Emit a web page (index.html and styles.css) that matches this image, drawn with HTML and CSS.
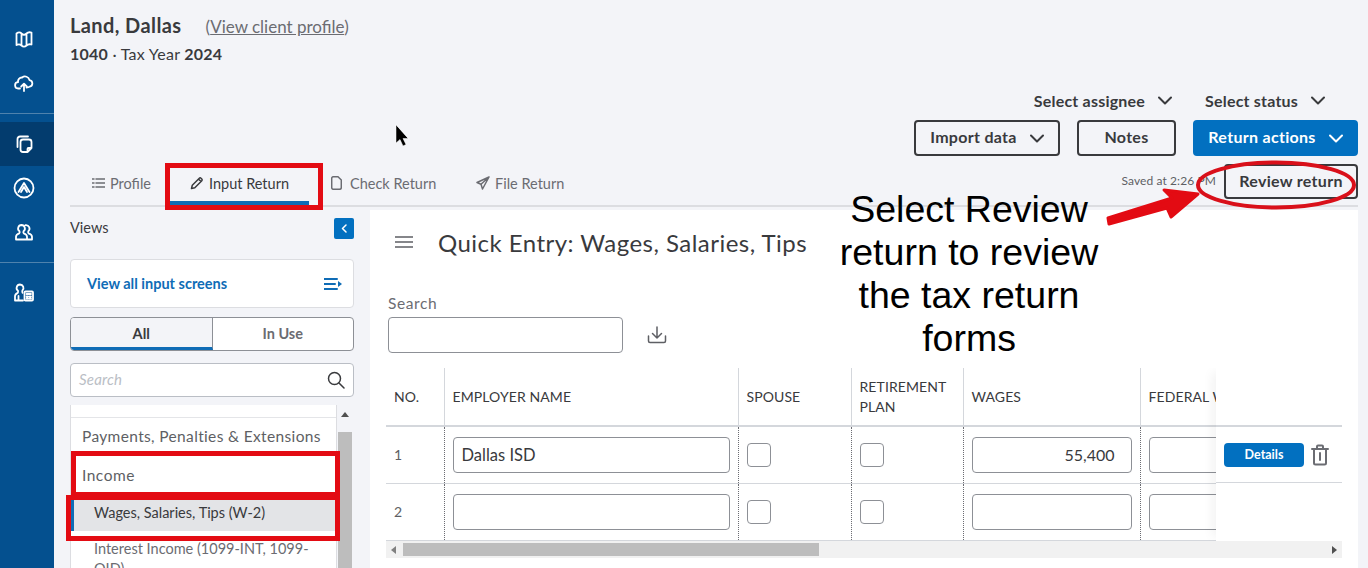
FILE: index.html
```html
<!DOCTYPE html>
<html lang="en">
<head>
    <meta charset="UTF-8">
    <meta name="viewport" content="width=device-width, initial-scale=1.0">
    <title>Land, Dallas - Input Return</title>
    <link rel="stylesheet" href="styles.css">
</head>
<body>
    <!-- Left rail -->
    <nav class="rail">
        <div class="rail-group">
            <a class="rail-item" href="#">
                <svg width="20" height="20" viewBox="0 0 20 20"><path d="M2.500 4.500c2-1.500 3.500-1.500 5 0c1.500 1.500 3.500 1.500 5 0c1.500-1.500 3-1.500 5-1v12c-2-.5-3.500-.5-5 1c-1.500 1.500-3.500 1.500-5 0c-1.500-1.500-3-1.500-5-.5z M7.500 4.500v12 M12.500 4.500v12"/></svg>
            </a>
            <a class="rail-item" href="#">
                <svg width="20" height="20" viewBox="0 0 20 20"><path d="M6 15.500H4.500a3.200 3.200 0 0 1-.4-6.400a3.800 3.800 0 0 1 4-4.600a4.600 4.600 0 0 1 7.400 2.600a3.300 3.300 0 0 1 .2 6.500c-.9.800-2 .9-3.200.9 M10 18v-7 M7.200 13.500l2.800-2.800l2.800 2.800"/></svg>
            </a>
        </div>
        <div class="rail-group">
            <a class="rail-item active" href="#">
                <svg width="20" height="20" viewBox="0 0 20 20"><path d="M3.500 13V5a2.500 2.500 0 0 1 2.500-2.500h8"/><path d="M6.500 8a2.500 2.500 0 0 1 2.500-2.500h6a2.500 2.500 0 0 1 2.500 2.500v6l-4 4H9a2.500 2.500 0 0 1-2.500-2.500z M13.500 18v-3a1 1 0 0 1 1-1h3"/></svg>
            </a>
            <a class="rail-item" href="#">
                <svg width="22" height="22" viewBox="0 0 22 22"><circle cx="11" cy="11" r="9.500"/><path d="M5.500 15L11 6l5.500 9 M8 15l3-5l3 5"/></svg>
            </a>
            <a class="rail-item" href="#">
                <svg width="20" height="20" viewBox="0 0 20 20"><path d="M7.500 3a3.500 3.500 0 0 0-2 6.300c.3.800.2 1.500-.2 2c-1.800.6-3.300 1.500-3.300 3.400V17.500h11v-2.800c0-1.900-1.500-2.800-3.300-3.400c-.4-.5-.5-1.200-.2-2a3.500 3.500 0 0 0-2-6.300z M11.500 3.200a3.500 3.500 0 0 1 2.800 6.100c-.3.800-.2 1.500.2 2c1.800.6 3.500 1.500 3.500 3.400v2.800h-5"/></svg>
            </a>
        </div>
        <div class="rail-group">
            <a class="rail-item" href="#">
                <svg width="20" height="20" viewBox="0 0 20 20"><path d="M6 1.500a3.500 3.500 0 0 0-2 6.300c.2.800.2 1.400-.2 2c-1.400.6-2.800 1.500-2.800 3.400v4.300h8 M6 1.500a3.500 3.500 0 0 1 2.400 6c-.2.800-.2 1.500.1 2.300 M4.500 13v4.500"/><rect x="10.500" y="8.500" width="8.500" height="9" rx="1"/><path d="M12.500 11h4.500 M12.500 13.500h1.500 M15.500 13.500h1.500 M12.500 15.500h1.500 M15.500 15.500h1.500"/></svg>
            </a>
        </div>
    </nav>

    <div class="page">
        <!-- Client header -->
        <header class="client">
            <div class="client-name">
                <h1>Land, Dallas</h1>
                <a href="#">(<u>View client profile</u>)</a>
            </div>
            <p class="client-year"><b>1040</b> &middot; Tax Year <b>2024</b></p>
        </header>

        <div class="selects">
            <span class="select">Select assignee <svg class="chev" width="14" height="9" viewBox="0 0 14 9"><path d="M1 1.500l6 6l6-6"/></svg></span>
            <span class="select">Select status <svg class="chev" width="14" height="9" viewBox="0 0 14 9"><path d="M1 1.500l6 6l6-6"/></svg></span>
        </div>

        <div class="actions">
            <button class="btn btn-import"><span>Import data</span> <svg class="chev" width="14" height="9" viewBox="0 0 14 9"><path d="M1 1.500l6 6l6-6"/></svg></button>
            <button class="btn btn-notes"><span>Notes</span></button>
            <button class="btn btn-primary"><span>Return actions</span> <svg class="chev" width="14" height="9" viewBox="0 0 14 9"><path d="M1 1.500l6 6l6-6"/></svg></button>
        </div>

        <!-- Tabs -->
        <div class="tabbar">
            <a class="tab tab-profile" href="#">
                <svg width="13" height="12" viewBox="0 0 13 12"><path d="M0 2h2 M0 6h2 M0 10h2 M4 2h9 M4 6h9 M4 10h9"/></svg>
                Profile
            </a>
            <a class="tab tab-input active" href="#">
                <svg width="14" height="14" viewBox="0 0 14 14"><path d="M1.500 12.500l.8-3.300l7-7a1.200 1.200 0 0 1 1.700 0l.8.800a1.200 1.200 0 0 1 0 1.700l-7 7z M8.500 3l2.500 2.500"/></svg>
                Input Return
            </a>
            <a class="tab tab-check" href="#">
                <svg width="11" height="14" viewBox="0 0 11 14"><path d="M2 .7h5l3.300 3.300v7.500a1.800 1.800 0 0 1-1.800 1.800h-6.500a1.800 1.800 0 0 1-1.300-1.800v-9a1.800 1.800 0 0 1 1.300-1.800z"/></svg>
                Check Return
            </a>
            <a class="tab tab-file" href="#">
                <svg width="14" height="14" viewBox="0 0 14 14"><path d="M13 1L1 6.500l4 1.800L6.500 13z M13 1L5 8.300"/></svg>
                File Return
            </a>
            <span class="saved">Saved at 2:26 PM</span>
            <button class="btn btn-review"><span>Review return</span></button>
        </div>

        <div class="workspace">
            <!-- Views column -->
            <aside class="views">
                <div class="views-head">
                    <span>Views</span>
                    <button class="collapse"><svg width="6" height="9" viewBox="0 0 6 9"><path d="M5 1L1.500 4.500L5 8"/></svg></button>
                </div>
                <a class="view-all" href="#">
                    View all input screens
                    <svg width="18" height="12" viewBox="0 0 18 12"><path class="line" d="M0 1h13 M0 6h11 M0 11h13"/><path class="fill" d="M14 3l4 3l-4 3z"/></svg>
                </a>
                <div class="toggle">
                    <span class="toggle-item on">All</span>
                    <span class="toggle-item">In Use</span>
                </div>
                <div class="views-search">
                    <span>Search</span>
                    <svg width="18" height="18" viewBox="0 0 18 18"><circle cx="7.500" cy="7.500" r="6"/><path d="M12 12l5 5"/></svg>
                </div>
                <div class="screens">
                    <ul class="screen-list">
                        <li class="group">Payments, Penalties &amp; Extensions</li>
                        <li class="group">Income</li>
                        <li class="sub current">Wages, Salaries, Tips (W-2)</li>
                        <li class="sub">Interest Income (1099-INT, 1099-OID)</li>
                    </ul>
                    <div class="vscroll"><i class="up"></i><i class="thumb"></i></div>
                </div>
            </aside>

            <!-- Quick entry panel -->
            <main class="panel">
                <div class="panel-head">
                    <svg width="18" height="12" viewBox="0 0 18 12"><path d="M0 1h18 M0 6h18 M0 11h18"/></svg>
                    <h2>Quick Entry: Wages, Salaries, Tips</h2>
                </div>
                <label class="search-label">Search</label>
                <div class="search-row">
                    <input type="text" class="field search-field">
                    <svg width="20" height="20" viewBox="0 0 20 20"><path d="M10 2v11 M5.500 8.500L10 13l4.500-4.500 M1.500 11v5a1.500 1.500 0 0 0 1.500 1.500h14a1.500 1.500 0 0 0 1.500-1.500v-5"/></svg>
                </div>
                <div class="grid-wrap">
                    <table class="grid">
                        <colgroup>
                            <col class="c-no"><col class="c-name"><col class="c-spouse"><col class="c-plan"><col class="c-wages"><col class="c-fed">
                        </colgroup>
                        <thead>
                            <tr><th>NO.</th><th>EMPLOYER NAME</th><th>SPOUSE</th><th>RETIREMENT PLAN</th><th>WAGES</th><th>FEDERAL WITHHOLDING</th></tr>
                        </thead>
                        <tbody>
                            <tr>
                                <td>1</td>
                                <td><input type="text" class="field cell-field" value="Dallas ISD"></td>
                                <td><span class="check"></span></td>
                                <td><span class="check"></span></td>
                                <td><input type="text" class="field cell-field num" value="55,400"></td>
                                <td><input type="text" class="field cell-field"></td>
                            </tr>
                            <tr>
                                <td>2</td>
                                <td><input type="text" class="field cell-field"></td>
                                <td><span class="check"></span></td>
                                <td><span class="check"></span></td>
                                <td><input type="text" class="field cell-field num"></td>
                                <td><input type="text" class="field cell-field"></td>
                            </tr>
                        </tbody>
                    </table>
                    <!-- pinned column sits over the table -->
                    <div class="pinned">
                        <div class="pinned-row">
                            <button class="details">Details</button>
                            <svg width="18" height="22" viewBox="0 0 18 22"><path d="M1 5h16 M6 5V2.500a1 1 0 0 1 1-1h4a1 1 0 0 1 1 1V5 M3 5v14a1.500 1.500 0 0 0 1.500 1.500h9a1.500 1.500 0 0 0 1.500-1.500V5 M9 9v7"/></svg>
                        </div>
                    </div>
                </div>
                <div class="hscroll"><i class="left"></i><i class="thumb"></i><i class="right"></i></div>
            </main>
        </div>
    </div>

    <!-- Annotations drawn over the screenshot -->
    <div class="mark mark-tab"></div>
    <div class="mark mark-income"></div>
    <div class="mark mark-wages"></div>
    <p class="note">Select Review return to review the tax return forms</p>
    <svg class="ink" width="1368" height="568" viewBox="0 0 1368 568">
        <ellipse class="ring" cx="1276" cy="185" rx="78" ry="22.500"/>
        <path class="arrow" d="M1109 224L1108 218L1172 198L1164 190L1198 194L1171 217L1167 208z"/>
        <path class="cursor" d="M396 125v18l4-3.500l3 6.500l3-1.500l-3-6h5z"/>
    </svg>
</body>
</html>
```

FILE: styles.css
```css
/* General Styles */
html, body {
    margin: 0;
    padding: 0;
    height: 568px;
    overflow: hidden;
}

body {
    display: flex;
    background-color: #f3f4f8;
    color: #393a3d;
    font-family: Lato, "Open Sans", sans-serif;
    position: relative;
}

a {
    color: inherit;
    text-decoration: none;
}

button {
    font-family: inherit;
}

svg {
    flex: none;
    fill: none;
    stroke: currentColor;
    stroke-width: 1.5;
    stroke-linecap: round;
    stroke-linejoin: round;
}

.chev {
    stroke-width: 2;
}

/* Left rail */
.rail {
    width: 54px;
    flex: none;
    background-color: #04508f;
    color: white;
    padding-top: 17px;
    box-sizing: border-box;
}

.rail svg {
    stroke-width: 1.8;
}

.rail-group {
    border-bottom: 1px solid #4f82ad;
    padding-bottom: 8px;
    margin-bottom: 8px;
}

.rail-group:last-child {
    border-bottom: none;
}

.rail-item {
    display: flex;
    align-items: center;
    justify-content: center;
    height: 44px;
    padding-right: 6px;
}

.rail-item.active {
    background-color: #033c6e;
}

/* Main column */
.page {
    flex: 1;
    min-width: 0;
    padding: 11px 10px 0 16px;
}

.client {
    height: 79px;
}

.client-name {
    display: flex;
    align-items: baseline;
    gap: 24px;
    height: 28px;
}

.client-name h1 {
    margin: 0;
    font-size: 20px;
    line-height: 28px;
    font-weight: 700;
    letter-spacing: .4px;
}

.client-name a {
    font-size: 17px;
    color: #6b6c72;
}

.client-year {
    margin: 5px 0 0;
    font-size: 16px;
    line-height: 20px;
    letter-spacing: .25px;
    color: #393a3d;
}

.selects {
    display: flex;
    justify-content: flex-end;
    gap: 33px;
    height: 24px;
    padding-right: 33px;
}

.select {
    display: flex;
    align-items: center;
    gap: 13px;
    padding-bottom: 4px;
    box-sizing: border-box;
    font-size: 16px;
    letter-spacing: .2px;
    font-weight: 700;
}

.actions {
    display: flex;
    justify-content: flex-end;
    gap: 17px;
    margin-top: 6px;
}

/* Buttons */
.btn {
    height: 36px;
    box-sizing: border-box;
    border: 2px solid #393a3d;
    border-radius: 4px;
    background-color: transparent;
    color: #393a3d;
    font-size: 16px;
    font-weight: 700;
    letter-spacing: .3px;
    padding: 0;
    display: flex;
    align-items: center;
    justify-content: center;
    gap: 13px;
}

.btn span {
    padding-bottom: 3px;
}

.btn-import {
    width: 146px;
}

.btn-notes {
    width: 99px;
}

.btn-primary {
    width: 165px;
    background-color: #0270c0;
    border-color: #0270c0;
    color: white;
}

.btn-review {
    width: 134px;
    height: 35px;
    margin-left: 8px;
    margin-top: -1px;
}

/* Tabs */
.tabbar {
    display: flex;
    align-items: flex-start;
    height: 40px;
    margin-top: 9px;
    border-bottom: 2px solid #dcdde1;
}

.tab {
    display: flex;
    align-items: center;
    gap: 5px;
    height: 36px;
    font-size: 14.500px;
    color: #6b6c72;
    border-bottom: 4px solid transparent;
}

.tab-profile {
    margin-left: 22px;
    width: 78px;
}

.tab-input {
    width: 139px;
    justify-content: center;
    color: #393a3d;
}

.tab-input.active {
    border-bottom-color: #0f6cb6;
}

.tab-check {
    margin-left: 22px;
    width: 145px;
    gap: 8px;
}

.tab-file {
    width: 110px;
}

.saved {
    margin-left: auto;
    font-size: 12px;
    letter-spacing: .1px;
    line-height: 32px;
    color: #5e5f64;
}

/* Workspace */
.workspace {
    display: flex;
    gap: 16px;
    margin-top: 1px;
}

.views {
    width: 284px;
    flex: none;
}

.views-head {
    display: flex;
    align-items: center;
    justify-content: space-between;
    height: 21px;
    margin-top: 10px;
    font-size: 14.500px;
}

.views-head span {
    padding-bottom: 3px;
}

.collapse {
    width: 20px;
    height: 21px;
    padding: 0;
    border: none;
    border-radius: 2px;
    background-color: #0270c0;
    color: white;
    display: flex;
    align-items: center;
    justify-content: center;
}

.view-all {
    display: flex;
    align-items: center;
    justify-content: space-between;
    height: 49px;
    box-sizing: border-box;
    margin-top: 20px;
    padding: 0 11px 0 16px;
    background-color: white;
    border: 1px solid #dcdde1;
    border-radius: 4px;
    color: #0f6cb6;
    font-size: 14.500px;
    font-weight: 700;
}

.view-all .line {
    stroke-width: 2;
}

.view-all .fill {
    fill: currentColor;
    stroke: none;
}

.toggle {
    display: flex;
    height: 34px;
    box-sizing: border-box;
    margin-top: 9px;
    border: 1px solid #8d9096;
    border-radius: 4px;
    overflow: hidden;
    background-color: white;
}

.toggle-item {
    flex: 1;
    text-align: center;
    font-size: 14.500px;
    line-height: 32px;
    font-weight: 700;
    color: #6b6c72;
}

.toggle-item.on {
    background-color: #f3f4f8;
    color: #393a3d;
    border-right: 1px solid #8d9096;
    border-bottom: 3px solid #0f6cb6;
    line-height: 31px;
}

.views-search {
    display: flex;
    align-items: center;
    justify-content: space-between;
    height: 34px;
    box-sizing: border-box;
    margin-top: 12px;
    padding: 0 8px;
    background-color: white;
    border: 1px solid #babec5;
    border-radius: 4px;
    font-size: 15px;
    letter-spacing: .2px;
    font-style: italic;
    color: #babec5;
}

.views-search span {
    padding-bottom: 2px;
}

.views-search svg {
    color: #393a3d;
}

.screens {
    display: flex;
    margin-top: 8px;
    height: 163px;
    overflow: hidden;
}

.screen-list {
    list-style: none;
    margin: 0;
    padding: 12px 0 0;
    width: 267px;
    height: 200px;
    box-sizing: border-box;
    background-color: white;
    border-right: 1px solid #dcdde1;
    border-left: 1px solid #dcdde1;
    flex: none;
}

.screen-list li {
    box-sizing: border-box;
}

.group {
    height: 39px;
    padding: 7px 0 0 11px;
    font-size: 15.500px;
    line-height: 22px;
    color: #5e5f64;
    letter-spacing: .35px;
    border-top: 1px solid #e4e5e8;
}

.group + .group {
    border-top: none;
    padding-top: 8px;
    letter-spacing: .5px;
}

.sub {
    padding: 0 8px 0 23px;
    font-size: 14.500px;
    line-height: 20px;
    color: #6b6c72;
}

.sub.current {
    height: 32px;
    line-height: 28px;
    margin-bottom: 8px;
    margin-top: 4px;
    background-color: #e3e4e7;
    color: #393a3d;
    border-left: 3px solid #0f6cb6;
    padding-left: 20px;
}

.vscroll {
    width: 14px;
    margin-left: 1px;
    display: flex;
    flex-direction: column;
    align-items: center;
    background-color: #f3f4f8;
}

.vscroll .up {
    margin-top: 7px;
    border: 4px solid transparent;
    border-top: none;
    border-bottom: 5px solid #505050;
}

.vscroll .thumb {
    display: block;
    width: 14px;
    height: 140px;
    margin-top: 15px;
    background-color: #bdbdbd;
}

/* Quick entry panel */
.panel {
    width: 988px;
    height: 358px;
    flex: none;
    box-sizing: border-box;
    background-color: white;
    padding: 0 16px;
    margin-top: 2px;
}

.panel-head {
    display: flex;
    align-items: center;
    height: 64px;
    padding-left: 9px;
    color: #5e5f64;
}

.panel-head h2 {
    margin: 0 0 0 25px;
    font-size: 24px;
    font-weight: 400;
    letter-spacing: .47px;
    color: #393a3d;
}

.search-label {
    display: block;
    margin-left: 2px;
    margin-top: 19px;
    font-size: 15.500px;
    letter-spacing: .6px;
    line-height: 20px;
    color: #6b6c72;
}

.search-row {
    display: flex;
    align-items: center;
    gap: 24px;
    margin-left: 2px;
    margin-top: 4px;
    color: #5e5f64;
}

.field {
    display: block;
    box-sizing: border-box;
    height: 36px;
    margin: 0;
    padding: 0 8px;
    border: 1px solid #8d9096;
    border-radius: 4px;
    background-color: white;
    color: #393a3d;
    font-family: inherit;
    font-size: 16.500px;
    outline: none;
}

.search-field {
    width: 235px;
}

/* Table */
.grid-wrap {
    position: relative;
    height: 173px;
    width: 956px;
    overflow: hidden;
    margin-top: 15px;
}

.grid {
    border-collapse: collapse;
    table-layout: fixed;
    width: 1000px;
}

.c-no { width: 58px; }
.c-name { width: 294px; }
.c-spouse { width: 113px; }
.c-plan { width: 112px; }
.c-wages { width: 177px; }
.c-fed { width: 246px; }

.grid th {
    height: 58px;
    box-sizing: border-box;
    padding: 0 8px;
    text-align: left;
    font-size: 14px;
    letter-spacing: .1px;
    line-height: 20px;
    font-weight: 400;
    color: #393a3d;
    border-bottom: 2px solid #d4d7dc;
    border-left: 1px solid #d4d7dc;
}

.grid th:first-child {
    border-left: none;
}

.grid td {
    height: 57px;
    box-sizing: border-box;
    padding: 0 8px;
    font-size: 14px;
    color: #5e5f64;
    border-bottom: 1px solid #d4d7dc;
    border-left: 1px dotted #6b6c72;
}

.grid td:first-child {
    border-left: none;
}

.cell-field {
    width: 100%;
}

.num {
    text-align: right;
    padding-right: 16px;
    font-size: 16px;
}

.check {
    display: block;
    width: 24px;
    height: 24px;
    box-sizing: border-box;
    border: 1px solid #8d9096;
    border-radius: 4px;
}

.pinned {
    position: absolute;
    top: 0;
    right: 0;
    bottom: 0;
    width: 126px;
    background-color: white;
    box-shadow: -8px 0 10px -4px rgba(0, 0, 0, .05);
}

.pinned-row {
    display: flex;
    align-items: center;
    gap: 7px;
    height: 58px;
    margin-top: 57px;
    padding-left: 8px;
    color: #6b6c72;
    border-top: 2px solid #d4d7dc;
    border-bottom: 1px solid #d4d7dc;
    box-sizing: border-box;
}

.pinned-row svg {
    stroke-width: 2;
}

.details {
    width: 80px;
    height: 24px;
    padding: 0;
    border: none;
    border-radius: 4px;
    background-color: #0270c0;
    color: white;
    font-size: 12.500px;
    font-weight: 700;
}

/* Horizontal scrollbar */
.hscroll {
    display: flex;
    align-items: center;
    width: 956px;
    height: 17px;
    background-color: #f1f1f1;
}

.hscroll .left {
    margin-left: 5px;
    border: 4px solid transparent;
    border-left: none;
    border-right: 5px solid #808080;
}

.hscroll .thumb {
    display: block;
    width: 416px;
    height: 13px;
    margin-left: 7px;
    background-color: #bdbdbd;
}

.hscroll .right {
    margin-left: auto;
    margin-right: 5px;
    border: 4px solid transparent;
    border-right: none;
    border-left: 5px solid #505050;
}

/* Annotations */
.mark {
    position: absolute;
    box-sizing: border-box;
    border: 5px solid #e30b13;
}

.mark-tab {
    left: 165px;
    top: 163px;
    width: 158px;
    height: 47px;
}

.mark-income {
    left: 71px;
    top: 451px;
    width: 269px;
    height: 46px;
}

.mark-wages {
    left: 66px;
    top: 495px;
    width: 274px;
    height: 46px;
}

.note {
    position: absolute;
    left: 819px;
    top: 188px;
    width: 300px;
    margin: 0;
    text-align: center;
    font-family: "Liberation Sans", Arial, sans-serif;
    font-size: 37.500px;
    line-height: 43px;
    color: black;
}

.ink {
    position: absolute;
    left: 0;
    top: 0;
}

.ring {
    stroke: #d9101a;
    stroke-width: 4;
}

.arrow {
    fill: #e30b13;
    stroke: #e30b13;
    stroke-width: 3;
}

.cursor {
    fill: black;
    stroke: white;
    stroke-width: .5;
}
```
